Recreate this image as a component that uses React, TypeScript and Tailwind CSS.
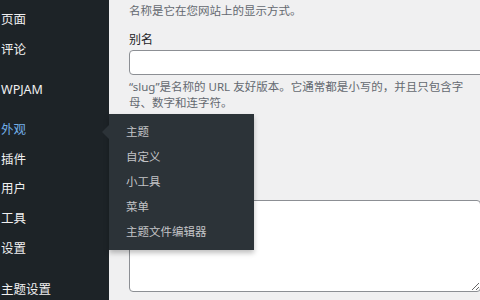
import React from "react";

const font = { fontFamily: '"Noto Sans", "Noto Sans CJK SC", sans-serif' };

function SideItem({ label, active, h = 30 }: { label: string; active?: boolean; h?: number }) {
  return (
    <div
      className={`shrink-0 flex items-center pl-[1px] text-[12.5px] ${
        active ? "text-[#72aee6]" : "text-[#f0f0f1]"
      }`}
      style={{ height: h }}
    >
      {label}
    </div>
  );
}

export default function App() {
  const sub = ["主题", "自定义", "小工具", "菜单", "主题文件编辑器"];
  return (
    <div
      className="relative flex w-[480px] h-[300px] overflow-hidden bg-[#f0f0f1]"
      style={font}
    >
      <div className="w-[109px] shrink-0 bg-[#1d2327] pt-[5px] flex flex-col overflow-hidden">
        <SideItem label="页面" />
        <SideItem label="评论" />
        <div className="h-[10px] shrink-0" />
        <SideItem label="WPJAM" />
        <div className="h-[10px] shrink-0" />
        <SideItem label="外观" active />
        <SideItem label="插件" />
        <SideItem label="用户" h={29} />
        <SideItem label="工具" />
        <SideItem label="设置" />
        <div className="h-[11px] shrink-0" />
        <SideItem label="主题设置" />
      </div>

      <div className="flex-1 min-w-0 pl-[20px] pt-[3px] flex flex-col">
        <p className="text-[11.5px] leading-[16px] text-[#646970] whitespace-nowrap">
          名称是它在您网站上的显示方式。
        </p>
        <label className="mt-[13px] text-[12px] leading-[16px] text-[#1d2327]">
          别名
        </label>
        <div className="mt-[2px] h-[25px] w-[400px] shrink-0 bg-white border border-[#8c8f94] rounded-[4px]" />
        <p className="mt-[4px] text-[11.5px] leading-[16px] text-[#646970] w-[345px]">
          “slug”是名称的 URL 友好版本。它通常都是小写的，并且只包含字母、数字和连字符。
        </p>
        <textarea
          readOnly
          className="mt-[89px] h-[92px] w-[352px] shrink-0 bg-white border border-[#8c8f94] rounded-[4px] resize-y outline-none"
        />
      </div>

      <div className="absolute left-[109px] top-[114px] w-[145px] h-[136px] bg-[#2c3338] shadow-[0_3px_5px_rgba(0,0,0,0.25)] py-[5.5px]">
        <div className="absolute left-[-14px] top-[11px] w-0 h-0 border-[7px] border-transparent border-r-[#2c3338]" />
        {sub.map((s) => (
          <div
            key={s}
            className="h-[25px] flex items-center pl-[17px] text-[11.5px] text-[#c3c4c7]"
          >
            {s}
          </div>
        ))}
      </div>
    </div>
  );
}
